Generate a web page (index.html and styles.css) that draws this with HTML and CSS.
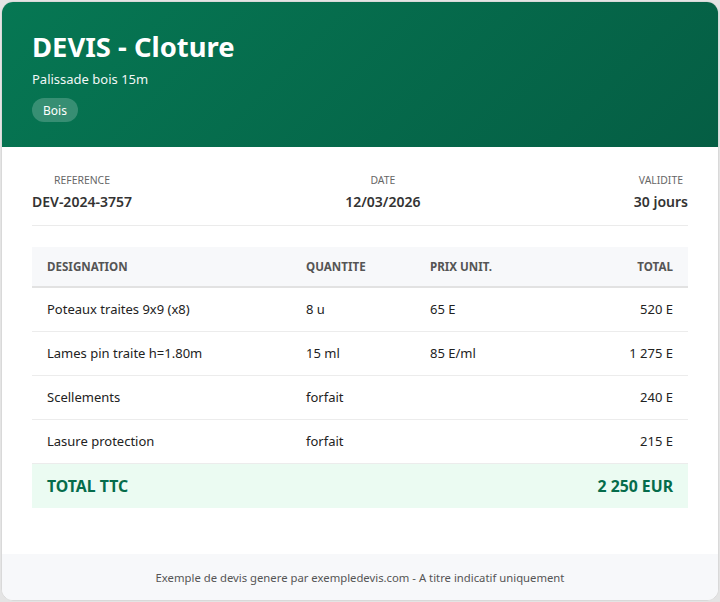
FILE: index.html
```html
<!DOCTYPE html>
<html lang="fr">
<head>
<meta charset="utf-8">
<title>Devis - Cloture</title>
<link rel="stylesheet" href="styles.css">
</head>
<body>
<div class="card">
  <header class="hero">
    <h1 class="title">DEVIS - Cloture</h1>
    <p class="subtitle">Palissade bois 15m</p>
    <span class="badge">Bois</span>
  </header>
  <main class="body">
    <div class="meta">
      <div class="meta-item">
        <div class="meta-label">Reference</div>
        <div class="meta-value">DEV-2024-3757</div>
      </div>
      <div class="meta-item">
        <div class="meta-label">Date</div>
        <div class="meta-value">12/03/2026</div>
      </div>
      <div class="meta-item">
        <div class="meta-label">Validite</div>
        <div class="meta-value">30 jours</div>
      </div>
    </div>
    <table class="lines">
      <colgroup>
        <col class="c1"><col class="c2"><col class="c3"><col class="c4">
      </colgroup>
      <thead>
        <tr><th>Designation</th><th>Quantite</th><th>Prix unit.</th><th class="num">Total</th></tr>
      </thead>
      <tbody>
        <tr><td>Poteaux traites 9x9 (x8)</td><td>8 u</td><td>65 E</td><td class="num">520 E</td></tr>
        <tr><td>Lames pin traite h=1.80m</td><td>15 ml</td><td>85 E/ml</td><td class="num">1 275 E</td></tr>
        <tr><td>Scellements</td><td>forfait</td><td></td><td class="num">240 E</td></tr>
        <tr><td>Lasure protection</td><td>forfait</td><td></td><td class="num">215 E</td></tr>
        <tr class="total"><td colspan="3">TOTAL TTC</td><td class="num">2 250 EUR</td></tr>
      </tbody>
    </table>
  </main>
  <footer class="foot">Exemple de devis genere par exempledevis.com - A titre indicatif uniquement</footer>
</div>
</body>
</html>
```
FILE: styles.css
```css
* { box-sizing: border-box; }
html, body { margin: 0; padding: 0; }
body {
  background: #e4e4e4;
  padding: 1px;
  font-family: "Noto Sans", "Open Sans", sans-serif;
  color: #222;
}
.card {
  background: #fff;
  border: 1px solid #d9d9d9;
  border-radius: 12px;
  overflow: hidden;
  height: 600px;
  display: flex;
  flex-direction: column;
}
.hero {
  background: linear-gradient(135deg, #067753 0%, #055e44 100%);
  color: #fff;
  padding: 27px 30px 24px;
  height: 145px;
  flex: none;
}
.title {
  margin: 0;
  font-size: 27.4px;
  font-weight: 700;
  line-height: 36px;
}
.subtitle {
  margin: 5px 0 0;
  font-size: 13px;
  line-height: 18px;
  opacity: 0.95;
}
.badge {
  display: inline-flex;
  align-items: center;
  margin-top: 10px;
  height: 24px;
  padding: 0 11px;
  border-radius: 12px;
  background: rgba(255,255,255,0.2);
  font-size: 12px;
}
.body {
  flex: 1;
  padding: 26px 30px 30px;
}
.meta {
  display: flex;
  justify-content: space-between;
  padding-bottom: 13px;
  border-bottom: 1px solid #ebebeb;
  margin-bottom: 21px;
}
.meta-item { text-align: center; }
.meta-label {
  font-size: 10.4px;
  text-transform: uppercase;
  color: #666;
  line-height: 14px;
}
.meta-value {
  font-size: 14px;
  font-weight: 600;
  color: #333;
  line-height: 20px;
  margin-top: 5px;
}
.lines {
  width: 100%;
  border-collapse: collapse;
  font-size: 13px;
}
.c1 { width: 259px; }
.c2 { width: 124px; }
.c3 { width: 140px; }
.lines th {
  background: #f7f8fa;
  text-align: left;
  font-size: 11.6px;
  font-weight: 700;
  text-transform: uppercase;
  color: #555;
  height: 40px;
  padding: 0 15px;
  border-bottom: 2px solid #e2e2e2;
}
.lines td {
  height: 44px;
  padding: 0 15px;
  border-bottom: 1px solid #ececec;
}
.lines .num { text-align: right; }
.lines tr.total td {
  height: 45px;
  background: #ebfbf2;
  color: #056c4b;
  font-weight: 700;
  font-size: 15.8px;
  border-bottom: none;
}
.foot {
  flex: none;
  background: #f7f8fa;
  height: 46px;
  display: flex;
  align-items: center;
  justify-content: center;
  font-size: 11.3px;
  color: #555;
}
```
